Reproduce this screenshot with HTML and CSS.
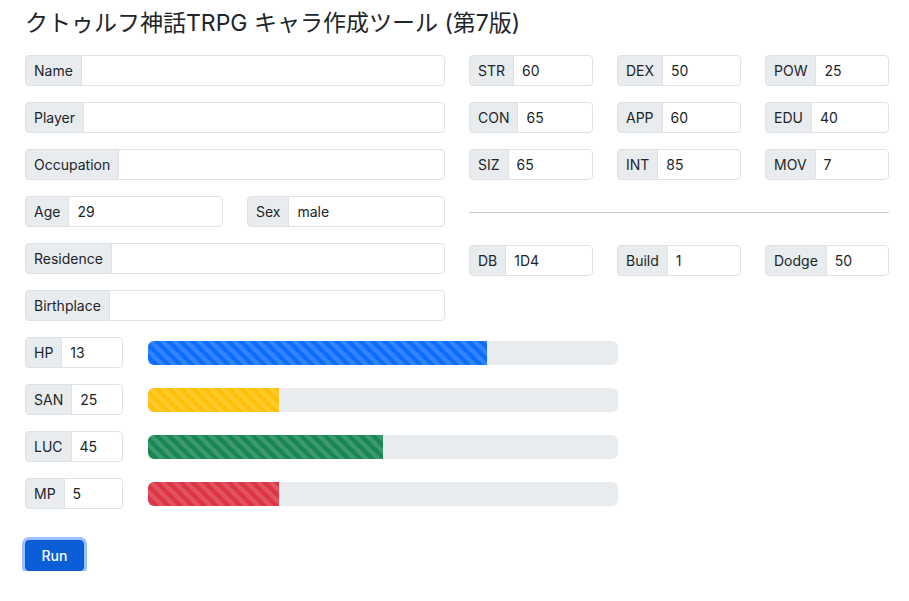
FILE: index.html
```html
<!DOCTYPE html>
<html lang="ja">
<head>
<meta charset="utf-8">
<title>クトゥルフ神話TRPG キャラ作成ツール (第7版)</title>
<link rel="stylesheet" href="styles.css">
</head>
<body>
<div class="page">
  <h1 class="title">クトゥルフ神話TRPG キャラ作成ツール (第7版)</h1>
  <div class="top">
    <div class="left">
      <div class="field"><div class="ig"><span class="ig-label">Name</span><input class="ig-input" type="text" value=""></div></div>
      <div class="field"><div class="ig"><span class="ig-label">Player</span><input class="ig-input" type="text" value=""></div></div>
      <div class="field"><div class="ig"><span class="ig-label">Occupation</span><input class="ig-input" type="text" value=""></div></div>
      <div class="field pair">
        <div class="ig"><span class="ig-label">Age</span><input class="ig-input" type="text" value="29"></div>
        <div class="ig"><span class="ig-label">Sex</span><input class="ig-input" type="text" value="male"></div>
      </div>
      <div class="field"><div class="ig"><span class="ig-label">Residence</span><input class="ig-input" type="text" value=""></div></div>
      <div class="field"><div class="ig"><span class="ig-label">Birthplace</span><input class="ig-input" type="text" value=""></div></div>
    </div>
    <div class="right">
      <div class="stats">
        <div class="ig"><span class="ig-label">STR</span><input class="ig-input" type="text" value="60"></div>
        <div class="ig"><span class="ig-label">DEX</span><input class="ig-input" type="text" value="50"></div>
        <div class="ig"><span class="ig-label">POW</span><input class="ig-input" type="text" value="25"></div>
        <div class="ig"><span class="ig-label">CON</span><input class="ig-input" type="text" value="65"></div>
        <div class="ig"><span class="ig-label">APP</span><input class="ig-input" type="text" value="60"></div>
        <div class="ig"><span class="ig-label">EDU</span><input class="ig-input" type="text" value="40"></div>
        <div class="ig"><span class="ig-label">SIZ</span><input class="ig-input" type="text" value="65"></div>
        <div class="ig"><span class="ig-label">INT</span><input class="ig-input" type="text" value="85"></div>
        <div class="ig"><span class="ig-label">MOV</span><input class="ig-input" type="text" value="7"></div>
      </div>
      <hr class="divider">
      <div class="stats">
        <div class="ig"><span class="ig-label">DB</span><input class="ig-input" type="text" value="1D4"></div>
        <div class="ig"><span class="ig-label">Build</span><input class="ig-input" type="text" value="1"></div>
        <div class="ig"><span class="ig-label">Dodge</span><input class="ig-input" type="text" value="50"></div>
      </div>
    </div>
  </div>
  <div class="gauges">
    <div class="gauge">
      <div class="ig small"><span class="ig-label">HP</span><input class="ig-input" type="text" value="13"></div>
      <div class="progress"><div class="bar blue" style="width:72.22%"></div></div>
    </div>
    <div class="gauge">
      <div class="ig small"><span class="ig-label">SAN</span><input class="ig-input" type="text" value="25"></div>
      <div class="progress"><div class="bar yellow" style="width:27.78%"></div></div>
    </div>
    <div class="gauge">
      <div class="ig small"><span class="ig-label">LUC</span><input class="ig-input" type="text" value="45"></div>
      <div class="progress"><div class="bar green" style="width:50%"></div></div>
    </div>
    <div class="gauge">
      <div class="ig small"><span class="ig-label">MP</span><input class="ig-input" type="text" value="5"></div>
      <div class="progress"><div class="bar red" style="width:27.78%"></div></div>
    </div>
  </div>
  <div class="actions">
    <button class="btn-run" type="button">Run</button>
  </div>
</div>
</body>
</html>
```
FILE: styles.css
```css
* { box-sizing: border-box; }
html, body { margin: 0; padding: 0; background: #fff; }
body {
  font-family: Inter, "Noto Sans CJK JP", sans-serif;
  color: #212529;
  font-size: 14px;
}
.page { padding: 9px 20px 0 25px; }
.title {
  font-size: 23px;
  line-height: 28px;
  font-weight: 400;
  margin: 0 0 18px;
}
.top { display: flex; gap: 24px; }
.left { flex: 0 0 420px; width: 420px; min-width: 0; }
.right { flex: 0 0 420px; width: 420px; min-width: 0; }
.field { margin-bottom: 16px; }
.pair { display: flex; gap: 24px; }
.pair .ig { flex: 1 1 0; }
.ig { display: flex; height: 31px; min-width: 0; }
.ig-label {
  display: flex;
  align-items: center;
  padding: 0 8px;
  background: #e9ecef;
  border: 1px solid #dee2e6;
  border-radius: 4px 0 0 4px;
  font-size: 14px;
  white-space: nowrap;
  color: #212529;
}
.ig-input {
  flex: 1 1 0;
  width: 0;
  min-width: 0;
  margin-left: -1px;
  padding: 0 8px;
  border: 1px solid #dee2e6;
  border-radius: 0 4px 4px 0;
  font-family: inherit;
  font-size: 14px;
  color: #212529;
  background: #fff;
  outline: none;
}
.stats {
  display: grid;
  grid-template-columns: repeat(3, 124px);
  column-gap: 24px;
  row-gap: 16px;
}
.divider {
  border: 0;
  border-top: 1px solid #c8c9ca;
  margin: 32px 0;
}
.gauge {
  display: flex;
  align-items: center;
  gap: 25px;
  margin-bottom: 16px;
}
.ig.small { width: 98px; flex: none; }
.progress {
  width: 470px;
  height: 24px;
  background: #e9ecef;
  border-radius: 6px;
  overflow: hidden;
  display: flex;
}
.bar {
  height: 100%;
  background-image: linear-gradient(45deg, rgba(255,255,255,.15) 25%, transparent 25%, transparent 50%, rgba(255,255,255,.15) 50%, rgba(255,255,255,.15) 75%, transparent 75%, transparent);
  background-size: 12px 12px;
}
.blue { background-color: #0d6efd; }
.yellow { background-color: #ffc107; }
.green { background-color: #198754; }
.red { background-color: #dc3545; }
.actions { padding-top: 15px; }
.btn-run {
  width: 59px;
  height: 31px;
  border: 1px solid #0a58ca;
  border-radius: 4px;
  background: #0b5ed7;
  color: #fff;
  font-family: inherit;
  font-size: 14px;
  font-weight: 500;
  box-shadow: 0 0 0 3px rgba(49,132,253,.5);
  padding: 0;
}
```
